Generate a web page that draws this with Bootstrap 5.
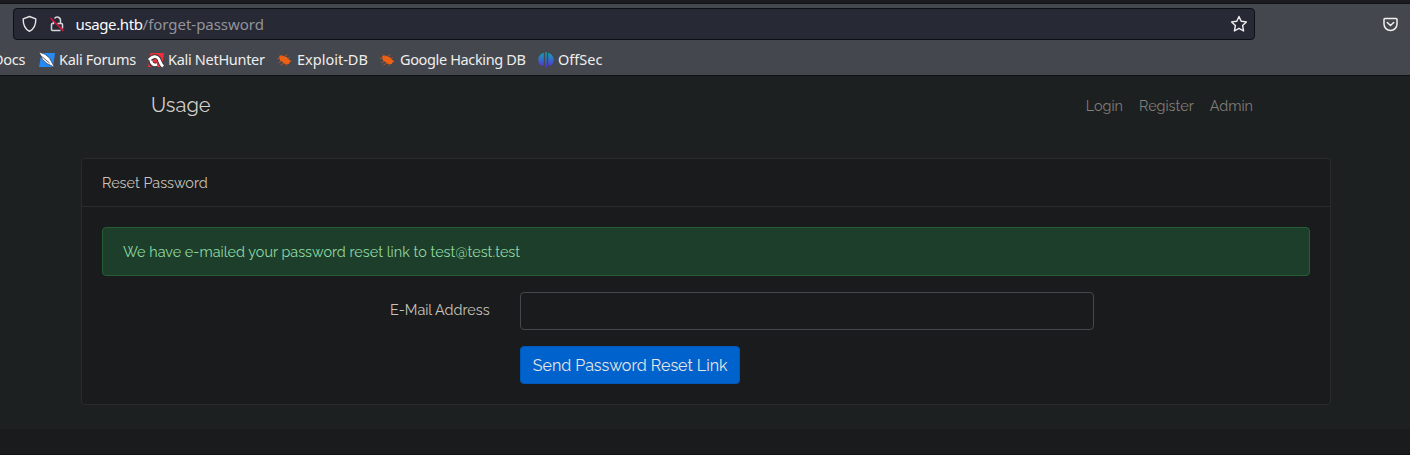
<!DOCTYPE html>
<html lang="en">
<head>
<meta charset="utf-8">
<meta name="viewport" content="width=device-width, initial-scale=1">
<title>Usage</title>
<link href="https://cdn.jsdelivr.net/npm/bootstrap@5.3.0/dist/css/bootstrap.min.css" rel="stylesheet">
<style>
body{background:#1a1b1d;color:#c8c3bb;font-family:Raleway,Lato,sans-serif;font-size:14.4px;line-height:23px;height:455px;overflow:hidden;border-bottom:1px solid #101113}
.chrome{height:76px;background:#44474e;border-top:3px solid #1b1c20;border-bottom:1px solid #0e1012;box-shadow:inset 0 1px #101216;font-family:"Noto Sans",sans-serif;color:#eeeeec}
.toolbar{height:42px;padding:5px 12px 5px 12.5px}
.urlbar{width:1242px;height:32px;background:#272935;border:1px solid #0d0f14;border-radius:4px;padding-left:7px;padding-right:6px;font-size:15px}
.url-text{margin-left:11px;color:#fbfbfe;white-space:nowrap}
.url-host{letter-spacing:-.38px}
.url-path{color:#92939b;letter-spacing:-.03px}
.bookmarks{height:29px;font-size:14.5px;white-space:nowrap}
.bm{width:var(--w);flex:none}
.bm svg{flex:none;margin-right:4px}
.tight{letter-spacing:-.3px}
.tighter{letter-spacing:-.36px}
.page{height:353px;background:#1c2021}
.nav-wrap{width:1140px;padding:0 14px 0 16px}
.site-nav{height:58px}
.site-nav .navbar-brand{color:#d3cfc9;font-size:20px;padding:0;margin:0}
.site-nav .nav-link{color:#827e78;padding:0 8px}
.panel{width:1250px;height:247px;margin:24px auto 0;left:1px;background:#1a1b1d;border:1px solid #292b2d;border-radius:4px;color:inherit}
.panel .card-header{height:48px;padding:12px 20px;background:#1a1b1c;border-color:#292b2d;color:#c8c3bb}
.panel .card-body{padding:20px}
.notice{height:49px;padding:12px 20px;margin-bottom:16px;background:#1c3e2a;border:1px solid #265c36;border-radius:4px;color:#8fd9a2;letter-spacing:.015px}
.gut{padding-left:15px;padding-right:15px}
.field-label{padding-top:6px}
.field{height:38px;background:#1a1b1d!important;border:1px solid #44484a;border-radius:4px}
.send{height:38px;width:220px;padding:2px 0 0 1px;line-height:24px;background:#0062cc;border:1px solid #0058b8;border-radius:4px;color:#e8e6e3;font-size:16px;white-space:nowrap}
</style>
<script src="https://cdn.jsdelivr.net/npm/bootstrap@5.3.0/dist/js/bootstrap.bundle.min.js"></script>
</head>
<body>
<header class="chrome">
 <div class="toolbar d-flex align-items-center justify-content-between">
  <div class="urlbar d-flex align-items-center">
   <svg width="17" height="18" viewBox="0 0 17 18" fill="none" stroke="#e6e6e8" stroke-width="1.4" stroke-linejoin="round"><path d="M8.500 1.500 14.800 3.800c.2 5.900-1.600 10.200-6.300 12.600C3.800 14 2 9.700 2.200 3.800z"/></svg>
   <svg style="margin-left:11px" width="16" height="18" viewBox="0 0 16 18" fill="none" stroke="#d6d6da" stroke-width="1.5"><path d="M5.500 3.500a3.300 3.300 0 0 1 6 2V8M8.500 8.500h4a1 1 0 0 1 1 1v4M11.500 15.500h-8a1 1 0 0 1-1-1v-5a1 1 0 0 1 1-1h1V6"/><path d="m1.500 3 13 13" stroke="#e0133c" stroke-width="1.600"/></svg>
   <span class="url-text"><span class="url-host">usage.htb</span><span class="url-path">/forget-password</span></span>
   <svg class="ms-auto" width="18" height="18" viewBox="0 0 18 18" fill="none" stroke="#eeeef0" stroke-width="1.400" stroke-linejoin="round"><path d="m9 1.500 2.200 4.800 5.200.6-3.800 3.600 1 5.500L9 13.300 4.400 16l1-5.500L1.600 6.900l5.200-.6z"/></svg>
  </div>
  <svg width="15" height="15" viewBox="0 0 15 15" fill="none" stroke="#f0f0ec" stroke-width="1.500" stroke-linecap="round" stroke-linejoin="round"><path d="M2 1.500h11a1 1 0 0 1 1 1V7a6.500 6.500 0 0 1-13 0V2.500a1 1 0 0 1 1-1zM4.300 5.500l3.200 3 3.200-3"/></svg>
 </div>
 <nav class="bookmarks d-flex align-items-center">
  <span class="bm d-flex" style="--w:39px"><span class="tight" style="margin-left:-7px">Docs</span></span>
  <span class="bm d-flex align-items-center" style="--w:109px"><svg width="16" height="16" viewBox="0 0 16 16"><path fill="#258af5" d="M2.500 1H16l-2 14H0z"/><path fill="#fff" stroke="#353941" stroke-width=".7" d="M0 0 6 2.300 10.500 6 15.500 15.300 8 11.500 3.500 7.500z"/><path d="m1.500 3.500 9 7.500" stroke="#353941" stroke-width=".8"/></svg><span class="tight">Kali Forums</span></span>
  <span class="bm d-flex align-items-center" style="--w:129px"><svg width="16" height="16" viewBox="0 0 16 16"><path fill="#e9303b" d="M2.500 1H16l-2 14H0z"/><g fill="none"><path stroke="#34373d" stroke-width="4.600" d="M2 8C4.500 4 8.500 3.500 10.500 6.500 12 8.500 11.500 11 15 14.500M3 9.500c0 3 2.500 4 5.500 3"/><path stroke="#fff" stroke-width="2.800" d="M1 8C4 4 8.500 3.500 10.500 6.500 12 8.500 11.500 11 15 14.500M3 8.500c0 3.500 2.500 5 6 4"/></g></svg><span class="tight">Kali NetHunter</span></span>
  <span class="bm d-flex align-items-center" style="--w:103px"><svg width="16" height="16" viewBox="0 0 16 16"><path fill="#ee6014" d="M2 4.500C4 3 6 3.500 7.500 4.500c2 .2 3.500 1.500 4.500 3.300l2.500 1.500-2 1-.5 1.700c-3.500.5-5.500-.5-6.500-2.300L3 8.500z"/><path d="M4.500 4.500 2.500 2.500M7.500 4.500l3-2M10 6.500l3-.8M4.500 9.500l-3 1M7 11l-3.500 2M9.500 12l-.5 2M2 6.500H0" stroke="#b85520" stroke-width=".9"/></svg>Exploit-DB</span>
  <span class="bm d-flex align-items-center" style="--w:158px"><svg width="16" height="16" viewBox="0 0 16 16"><path fill="#ee6014" d="M2 4.500C4 3 6 3.500 7.500 4.500c2 .2 3.500 1.500 4.500 3.300l2.500 1.500-2 1-.5 1.700c-3.500.5-5.500-.5-6.500-2.300L3 8.500z"/><path d="M4.500 4.500 2.500 2.500M7.500 4.500l3-2M10 6.500l3-.8M4.500 9.500l-3 1M7 11l-3.500 2M9.500 12l-.5 2M2 6.500H0" stroke="#b85520" stroke-width=".9"/></svg><span class="tighter">Google Hacking DB</span></span>
  <span class="bm d-flex align-items-center" style="--w:80px"><svg width="16" height="16" viewBox="0 0 16 16"><defs><linearGradient id="og" x2="0" y2="1"><stop stop-color="#0fa5b0"/><stop offset="1" stop-color="#5a2ce0"/></linearGradient></defs><path fill="url(#og)" d="M5.800.8v12.400L3 13.500C-.8 10.500-1.200 3.200 5.800.8zM10.200.8v12.400l2.800.3c3.800-3 4.200-10.300-2.800-12.700zM7.200.2h1.600v15.600H7.200z"/></svg>OffSec</span>
 </nav>
</header>
<main class="page">
 <div class="nav-wrap mx-auto">
  <nav class="site-nav d-flex align-items-center justify-content-between">
   <a class="navbar-brand" href="#">Usage</a>
   <div class="nav"><a class="nav-link" href="#">Login</a><a class="nav-link" href="#">Register</a><a class="nav-link" href="#">Admin</a></div>
  </nav>
 </div>
 <section class="card panel">
  <div class="card-header">Reset Password</div>
  <div class="card-body">
   <div class="alert notice" role="alert">We have e-mailed your password reset link to test@test.test</div>
   <form>
    <div class="row g-0 mb-3">
     <label for="email" class="col-4 gut text-end field-label">E-Mail Address</label>
     <div class="col-6 gut"><input id="email" type="email" class="form-control field"></div>
    </div>
    <div class="row g-0"><div class="col-6 offset-4 gut"><button type="button" class="btn send">Send Password Reset Link</button></div></div>
   </form>
  </div>
 </section>
</main>
</body>
</html>
